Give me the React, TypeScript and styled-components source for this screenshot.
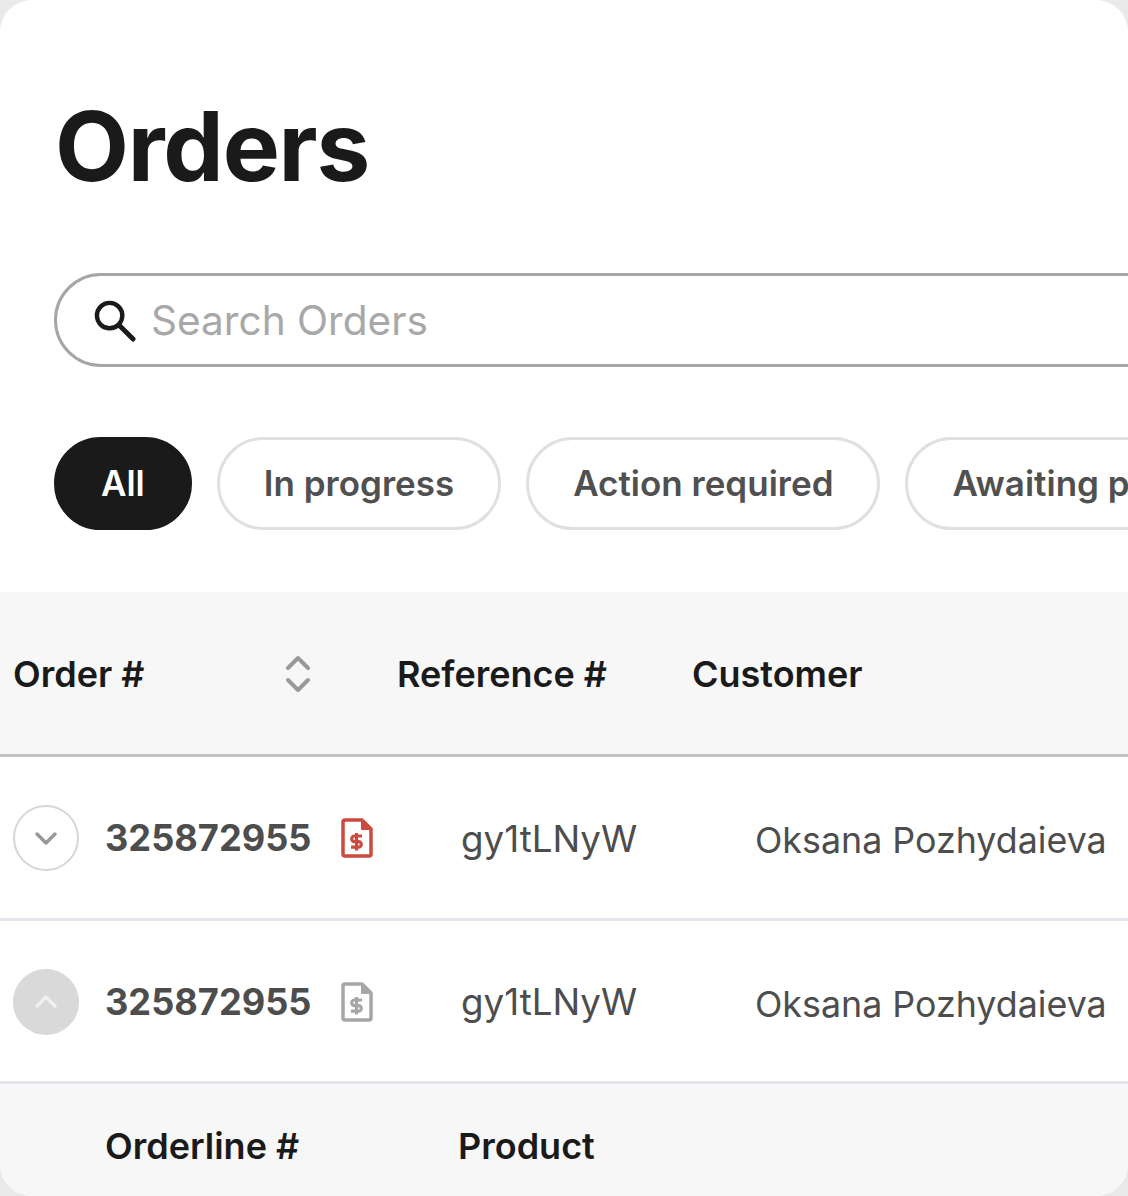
import * as React from 'react';
import styled, { createGlobalStyle } from 'styled-components';

const GlobalStyle = createGlobalStyle`
    html, body {
        margin: 0;
        padding: 0;
        background: #e9e9ea;
    }
    body {
        font-family: Inter, "Liberation Sans", sans-serif;
        overflow: hidden;
    }
`;

const Card = styled.div`
    width: 1128px;
    height: 1196px;
    background: #ffffff;
    border-radius: 32px;
    overflow: hidden;
`;

const Title = styled.h1`
    margin: 0;
    padding: 96px 0 0 55px;
    height: 100px;
    font-size: 96px;
    line-height: 100px;
    font-weight: 700;
    color: #1a1a1a;
    letter-spacing: -1.2px;
`;

const SearchBar = styled.div`
    margin: 77px -100px 0 54px;
    height: 94px;
    box-sizing: border-box;
    border: 3px solid #a6a6a6;
    border-radius: 47px;
    display: flex;
    align-items: center;
    padding-left: 36px;
    gap: 15px;
    font-size: 40.6px;
    color: #a8a8a8;
`;

const Filters = styled.div`
    display: flex;
    gap: 25px;
    margin: 70px 0 0 54px;
    width: 1200px;
`;

const Pill = styled.div<{ $active?: boolean }>`
    height: 93px;
    box-sizing: border-box;
    border-radius: 47px;
    padding: 0 44px 2px;
    display: flex;
    align-items: center;
    font-size: 35px;
    font-weight: 600;
    white-space: nowrap;
    color: ${p => (p.$active ? '#ffffff' : '#505050')};
    background: ${p => (p.$active ? '#1a1a1a' : '#ffffff')};
    border: 3px solid ${p => (p.$active ? '#1a1a1a' : '#e0e0e0')};
`;

const HeaderRow = styled.div`
    margin-top: 62px;
    height: 165px;
    box-sizing: border-box;
    background: #f7f7f8;
    border-bottom: 3px solid #c4c4c6;
    display: flex;
    align-items: center;
    padding: 2px 0 0 13px;
    font-size: 36px;
    font-weight: 600;
    color: #1a1a1a;
`;

const HeaderCell = styled.div<{ $width: number }>`
    width: ${p => p.$width}px;
    flex: none;
    display: flex;
    align-items: center;
    justify-content: space-between;
    white-space: nowrap;
`;

const Row = styled.div`
    height: 163.5px;
    box-sizing: border-box;
    border-bottom: 3px solid #e4e6ec;
    display: flex;
    align-items: center;
    padding: 2px 0 0 13px;
    color: #4d4d4d;
`;

const Toggle = styled.div<{ $open?: boolean }>`
    width: 66px;
    height: 66px;
    flex: none;
    box-sizing: border-box;
    border-radius: 50%;
    display: flex;
    align-items: center;
    justify-content: center;
    background: ${p => (p.$open ? '#d9d9d9' : '#ffffff')};
    border: 2px solid ${p => (p.$open ? '#d9d9d9' : '#d6d6d6')};
    color: ${p => (p.$open ? '#f0f0f0' : '#999999')};
`;

const OrderNumber = styled.div`
    width: 235px;
    margin-left: 26px;
    flex: none;
    font-size: 36.2px;
    font-weight: 700;
`;

const DocIcon = styled.svg<{ $alert?: boolean }>`
    flex: none;
    color: ${p => (p.$alert ? '#cc4a3f' : '#a6a6a6')};
`;

const Reference = styled.div`
    width: 294px;
    margin-left: 88px;
    flex: none;
    font-size: 36.75px;
    font-weight: 400;
`;

const CustomerName = styled.div`
    padding-top: 4px;
    font-size: 35.8px;
    font-weight: 400;
    white-space: nowrap;
`;

const SubHeader = styled.div`
    height: 120px;
    background: #f7f7f8;
    display: flex;
    padding: 40px 0 0 105px;
    box-sizing: border-box;
    font-size: 36px;
    font-weight: 600;
    color: #1a1a1a;
`;

const SubHeaderCell = styled.div<{ $width: number }>`
    width: ${p => p.$width}px;
    flex: none;
`;

const SearchIcon = () => (
    <svg width="43" height="43" viewBox="0 0 44 44" fill="none" stroke="#1a1a1a" strokeWidth="4.5">
        <circle cx="17" cy="17" r="13" />
        <path d="M26.5 26.5L41 41" strokeLinecap="round" strokeWidth="5" />
    </svg>
);

const SortIcon = () => (
    <svg width="26" height="38" viewBox="0 0 26 38" fill="none" stroke="#999999" strokeWidth="4" strokeLinecap="round" strokeLinejoin="round">
        <path d="M3 13L13 3l10 10" />
        <path d="M3 25l10 10 10-10" />
    </svg>
);

const ChevronIcon: React.FC<{ up?: boolean }> = ({ up }) => (
    <svg width="24" height="15" viewBox="0 0 24 15" fill="none" stroke="currentColor" strokeWidth="3.5" strokeLinecap="round" strokeLinejoin="round">
        <path d={up ? 'M3 12l9-9 9 9' : 'M3 3l9 9 9-9'} />
    </svg>
);

const FileDollarIcon: React.FC<{ alert?: boolean }> = ({ alert }) => (
    <DocIcon $alert={alert} width="33" height="40" viewBox="0 0 33 40" fill="none" stroke="currentColor" strokeWidth="3.5" strokeLinejoin="round">
        <path d="M3 4a2 2 0 0 1 2-2h17l9 9v25a2 2 0 0 1-2 2H5a2 2 0 0 1-2-2z" />
        <path d="M22 2v9h9z" fill="currentColor" strokeWidth="2" />
        <path d="M22 18h-7.500a2.800 2.800 0 0 0 0 5.600h4a2.800 2.800 0 0 1 0 5.600H11M16.500 15v17.500" strokeWidth="3.200" strokeLinecap="butt" />
    </DocIcon>
);

const OrderRow: React.FC<{ open?: boolean }> = ({ open }) => (
    <Row>
        <Toggle $open={open}>
            <ChevronIcon up={open} />
        </Toggle>
        <OrderNumber>325872955</OrderNumber>
        <FileDollarIcon alert={!open} />
        <Reference>gy1tLNyW</Reference>
        <CustomerName>Oksana Pozhydaieva</CustomerName>
    </Row>
);

export default function App() {
    return (
        <Card>
            <GlobalStyle />
            <Title>Orders</Title>
            <SearchBar>
                <SearchIcon />
                Search Orders
            </SearchBar>
            <Filters>
                <Pill $active>All</Pill>
                <Pill>In progress</Pill>
                <Pill>Action required</Pill>
                <Pill>Awaiting payment</Pill>
            </Filters>
            <HeaderRow>
                <HeaderCell $width={298}>
                    Order #
                    <SortIcon />
                </HeaderCell>
                <HeaderCell $width={86} />
                <HeaderCell $width={295}>Reference #</HeaderCell>
                <HeaderCell $width={300}>Customer</HeaderCell>
            </HeaderRow>
            <OrderRow />
            <OrderRow open />
            <SubHeader>
                <SubHeaderCell $width={353}>Orderline #</SubHeaderCell>
                <SubHeaderCell $width={300}>Product</SubHeaderCell>
            </SubHeader>
        </Card>
    );
}
